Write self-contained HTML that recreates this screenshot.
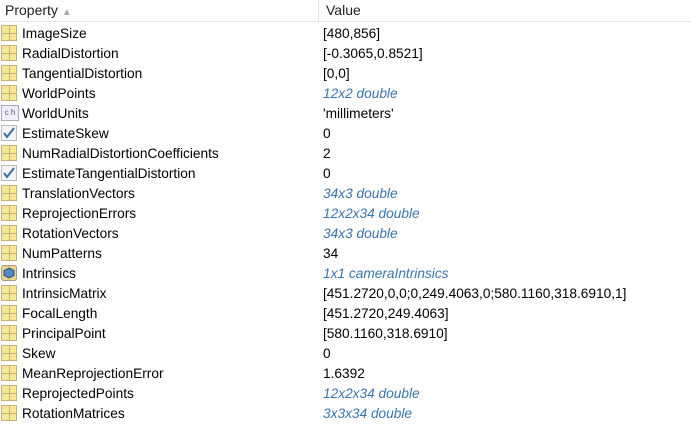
<!DOCTYPE html>
<html><head><style>
body{margin:0;width:691px;height:438px;background:#fff;font-family:"Liberation Sans",sans-serif;font-size:13.7px;color:#000;overflow:hidden;position:relative}
.hdr{position:absolute;top:0;left:0;width:691px;height:21px;border-bottom:1px solid #e5e5e5;background:#fff}
.hdr span{position:absolute;top:2px;font-size:14px;color:#1e1e1e}
.div{position:absolute;left:318px;top:0;width:1px;height:21px;background:#e5e5e5}
.row{position:absolute;left:0;width:691px;height:20px}
.n{position:absolute;left:22px;top:3px}
.v{position:absolute;left:323px;top:3px}
.i{font-style:italic;color:#3a75ad}
.ic{position:absolute;left:1px;top:2px;width:16px;height:16px;box-sizing:border-box}
.g{background:#f8e896;border:1px solid #c4b27a;background-image:linear-gradient(#c4b27a,#c4b27a),linear-gradient(#c4b27a,#c4b27a);background-size:1px 100%,100% 1px;background-position:7px 0,0 7px;background-repeat:no-repeat}
</style></head><body>
<div class="hdr"><span style="left:5px">Property <span style="position:static;color:#aaa;font-size:10px">▲</span></span><div class="div"></div><span style="left:326px">Value</span></div>
<div id="rows"></div>
<script>
const d=[["ImageSize","[480,856]",0,"g"],["RadialDistortion","[-0.3065,0.8521]",0,"g"],["TangentialDistortion","[0,0]",0,"g"],["WorldPoints","12x2 double",1,"g"],["WorldUnits","'millimeters'",0,"c"],["EstimateSkew","0",0,"k"],["NumRadialDistortionCoefficients","2",0,"g"],["EstimateTangentialDistortion","0",0,"k"],["TranslationVectors","34x3 double",1,"g"],["ReprojectionErrors","12x2x34 double",1,"g"],["RotationVectors","34x3 double",1,"g"],["NumPatterns","34",0,"g"],["Intrinsics","1x1 cameraIntrinsics",1,"o"],["IntrinsicMatrix","[451.2720,0,0;0,249.4063,0;580.1160,318.6910,1]",0,"g"],["FocalLength","[451.2720,249.4063]",0,"g"],["PrincipalPoint","[580.1160,318.6910]",0,"g"],["Skew","0",0,"g"],["MeanReprojectionError","1.6392",0,"g"],["ReprojectedPoints","12x2x34 double",1,"g"],["RotationMatrices","3x3x34 double",1,"g"]];
let h="";d.forEach((r,i)=>{let ic;
if(r[3]=="g")ic='<div class="ic g"></div>';
else if(r[3]=="c")ic='<div class="ic" style="border:1px solid #aab;background:#eef;font-size:8px;color:#557;line-height:14px;text-align:center;width:18px">c h</div>';
else if(r[3]=="k")ic='<svg class="ic" viewBox="0 0 16 16"><rect x=".5" y=".5" width="15" height="15" fill="#f4f4f4" stroke="#bbb"/><path d="M3 8l3 4 7-9" stroke="#3a6ea5" stroke-width="2" fill="none"/></svg>';
else ic='<svg class="ic" viewBox="0 0 16 16"><rect x=".5" y=".5" width="15" height="15" rx="2" fill="#e9d58c" stroke="#a98"/><path d="M8 3l5 2.5v5L8 13 3 10.5v-5z" fill="#5b86c4" stroke="#2a4f80"/></svg>';
h+=`<div class="row" style="top:${23+i*20}px">${ic}<span class="n">${r[0]}</span><span class="v${r[2]?' i':''}">${r[1]}</span></div>`});
document.getElementById("rows").innerHTML=h;
</script>
</body></html>
